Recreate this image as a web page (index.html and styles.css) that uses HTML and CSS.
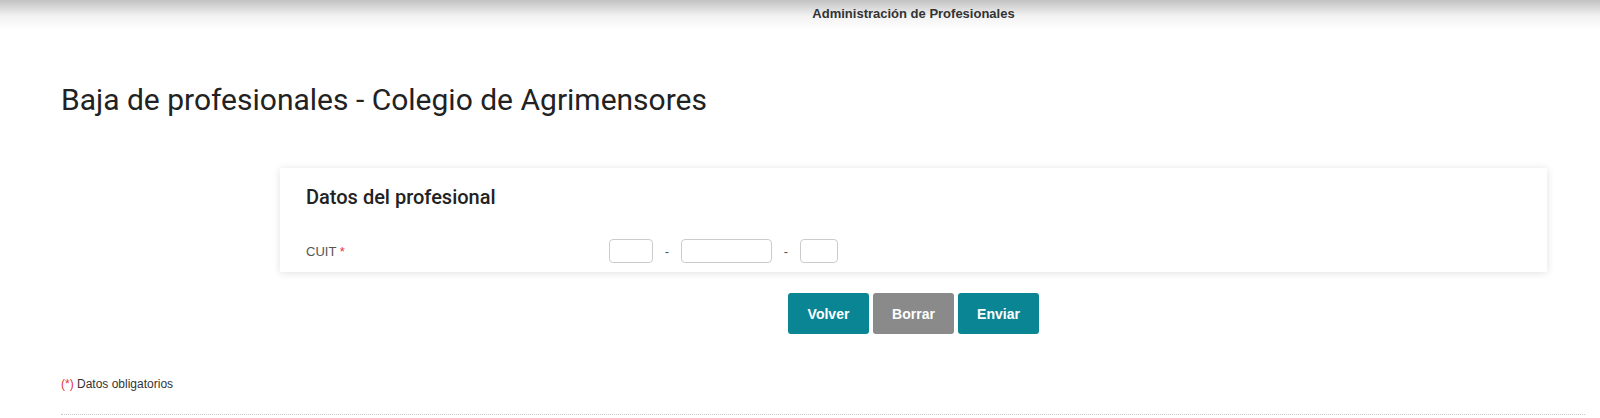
FILE: index.html
```html
<!DOCTYPE html>
<html>
<head>
  <title>Baja de profesionales</title>
  <link rel="stylesheet" href="styles.css">
</head>
<body>
  <header class="top-bar">
    <div class="top-bar-inner">Administración de Profesionales</div>
  </header>

  <div class="page">
    <h1 class="page-title">Baja de profesionales - Colegio de Agrimensores</h1>

    <div class="form-area">
      <div class="card">
        <h2 class="card-title">Datos del profesional</h2>
        <form id="baja-form" class="form-row">
          <label for="cuit1">CUIT <span class="req">*</span></label>
          <div class="cuit-group">
            <input type="text" id="cuit1" class="cuit-a" maxlength="2">
            <span class="dash">-</span>
            <input type="text" id="cuit2" class="cuit-b" maxlength="8">
            <span class="dash">-</span>
            <input type="text" id="cuit3" class="cuit-c" maxlength="1">
          </div>
        </form>
      </div>

      <div class="actions">
        <button type="button" class="btn btn-primary">Volver</button>
        <button type="reset" form="baja-form" class="btn btn-grey">Borrar</button>
        <button type="submit" form="baja-form" class="btn btn-primary">Enviar</button>
      </div>
    </div>

    <p class="note"><span class="req">(*)</span> Datos obligatorios</p>
    <hr class="divider">
  </div>
</body>
</html>
```

FILE: styles.css
```css
body {
  margin: 0;
  font-family: "Liberation Sans", Arial, sans-serif;
  color: #333;
  background: #fff;
}

.top-bar {
  height: 30px;
  background: linear-gradient(to bottom, #c2c2c2 0px, #f2f2f2 16px, #fff 30px);
}

.top-bar-inner {
  margin: 0 53px 0 280px;
  padding-top: 6px;
  text-align: center;
  font-size: 13px;
  font-weight: bold;
  color: #333;
}

.page {
  padding: 0 15px 0 61px;
}

.page-title {
  margin: 53px 0 0 0;
  font-family: Roboto, sans-serif;
  font-weight: 400;
  font-size: 30px;
  line-height: 34px;
  color: #222;
}

.form-area {
  margin: 51px 38px 0 219px;
}

.card {
  background: #fff;
  padding: 17px 22px 9px 26px;
  box-shadow: 0 1px 8px rgba(0, 0, 0, 0.12);
}

.card-title {
  margin: 0 0 30px;
  font-family: Roboto, sans-serif;
  font-weight: 500;
  font-size: 20px;
  line-height: 24px;
  color: #222;
}

.form-row {
  display: grid;
  grid-template-columns: 303px auto;
  align-items: center;
}

.form-row label {
  font-size: 13px;
  color: #555;
}

.req {
  color: #e0353f;
}

.cuit-group {
  display: flex;
  align-items: center;
}

.cuit-group input {
  box-sizing: border-box;
  height: 24px;
  border: 1px solid #ccc;
  border-radius: 4px;
  padding: 2px 5px;
  font-size: 13px;
}

.cuit-a { width: 44px; }
.cuit-b { width: 91px; }
.cuit-c { width: 38px; }

.dash {
  width: 28px;
  text-align: center;
  font-size: 13px;
  color: #555;
}

.actions {
  display: flex;
  justify-content: center;
  gap: 4px;
  margin-top: 21px;
}

.btn {
  width: 81px;
  height: 41px;
  border: none;
  border-radius: 3px;
  color: #fff;
  font-family: "Liberation Sans", Arial, sans-serif;
  font-size: 14px;
  font-weight: bold;
  cursor: pointer;
}

.btn-primary {
  background-color: #0a8593;
}

.btn-grey {
  background-color: #8a8a8a;
}

.note {
  margin: 43px 0 0;
  font-size: 12px;
  color: #333;
}

.divider {
  margin: 23px 0 0;
  border: none;
  border-top: 1px dotted #c8c8c8;
}
```
